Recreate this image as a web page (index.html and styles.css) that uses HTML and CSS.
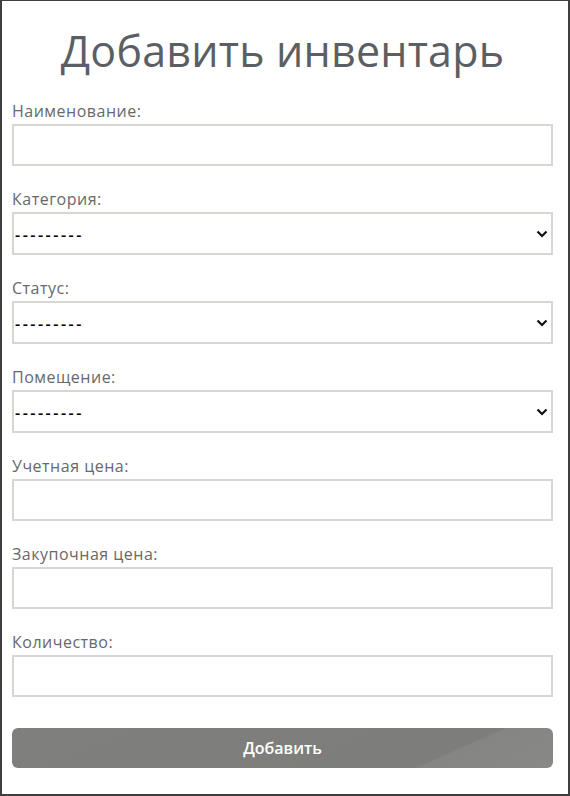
FILE: index.html
```html
<!DOCTYPE html>
<html lang="ru">
<head>
<meta charset="utf-8">
<title>Добавить инвентарь</title>
<link rel="stylesheet" href="styles.css">
</head>
<body>
<main class="page">
  <h1 class="title">Добавить инвентарь</h1>
  <form class="form">
    <div class="field">
      <label class="label" for="name">Наименование:</label>
      <input class="control" id="name" type="text">
    </div>
    <div class="field">
      <label class="label" for="cat">Категория:</label>
      <div class="select-wrap">
        <select class="control select" id="cat"><option>---------</option></select>
        <svg class="chevron" width="12" height="8" viewBox="0 0 12 8"><path d="M1.5 1.5 L6 6 L10.5 1.5" fill="none" stroke="#111" stroke-width="2.2"/></svg>
      </div>
    </div>
    <div class="field">
      <label class="label" for="status">Статус:</label>
      <div class="select-wrap">
        <select class="control select" id="status"><option>---------</option></select>
        <svg class="chevron" width="12" height="8" viewBox="0 0 12 8"><path d="M1.5 1.5 L6 6 L10.5 1.5" fill="none" stroke="#111" stroke-width="2.2"/></svg>
      </div>
    </div>
    <div class="field">
      <label class="label" for="room">Помещение:</label>
      <div class="select-wrap">
        <select class="control select" id="room"><option>---------</option></select>
        <svg class="chevron" width="12" height="8" viewBox="0 0 12 8"><path d="M1.5 1.5 L6 6 L10.5 1.5" fill="none" stroke="#111" stroke-width="2.2"/></svg>
      </div>
    </div>
    <div class="field">
      <label class="label" for="acc">Учетная цена:</label>
      <input class="control" id="acc" type="text">
    </div>
    <div class="field">
      <label class="label" for="buy">Закупочная цена:</label>
      <input class="control" id="buy" type="text">
    </div>
    <div class="field">
      <label class="label" for="qty">Количество:</label>
      <input class="control" id="qty" type="text">
    </div>
    <button class="submit" type="button">Добавить</button>
  </form>
</main>
</body>
</html>
```
FILE: styles.css
```css
* { box-sizing: border-box; }
html, body { margin: 0; padding: 0; background: #fff; }
body { font-family: "Open Sans", "Noto Sans", sans-serif; }

.page {
  width: 570px;
  height: 796px;
  border-style: solid;
  border-color: #3f3f3f;
  border-width: 1px 2px 2px 2px;
  padding: 0 15px 0 10px;
}

.title {
  margin: 22px 0 21px;
  font-size: 43px;
  line-height: 56px;
  font-weight: 500;
  color: #5b5f64;
  text-align: center;
  letter-spacing: 0.2px;
}

.form { display: flex; flex-direction: column; gap: 22px; }

.field { display: flex; flex-direction: column; }

.label {
  display: block;
  font-size: 16px;
  line-height: 22px;
  color: #686868;
  letter-spacing: 0.5px;
  margin-bottom: 2px;
}

.control {
  display: block;
  width: 100%;
  height: 42px;
  margin: 0;
  border: 2px solid #d6d7d1;
  border-radius: 0;
  background: #fff;
  font-family: "Open Sans", "Noto Sans", sans-serif;
  font-size: 16px;
  color: #000;
  padding: 0 4px;
  outline: none;
}

.select-wrap { position: relative; }

.select {
  height: 43px;
  appearance: none;
  -webkit-appearance: none;
  padding: 3px 0 0 1px;
  letter-spacing: 2.5px;
  font-weight: 600;
}

.chevron {
  position: absolute;
  right: 5px;
  top: 18px;
  pointer-events: none;
}

.submit {
  margin-top: 9px;
  height: 40px;
  width: 100%;
  border: none;
  border-radius: 6px;
  background: linear-gradient(156deg, #7f807d 0%, #7d7e7b 78%, #858684 78.5%, #888987 100%);
  color: #fff;
  font-family: "Open Sans", "Noto Sans", sans-serif;
  font-size: 16px;
  font-weight: 600;
  cursor: pointer;
}
```
